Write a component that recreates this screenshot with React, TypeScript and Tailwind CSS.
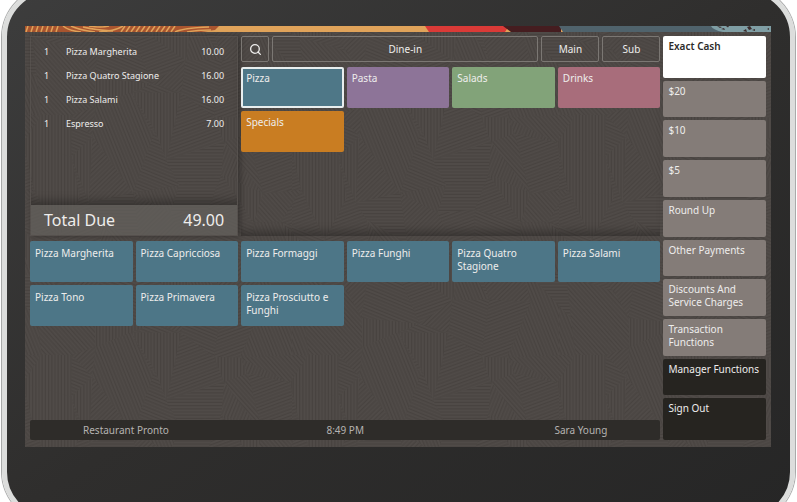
import { Search } from 'lucide-react';
import clsx from 'clsx';

const order = [
  { qty: 1, name: 'Pizza Margherita', price: 10 },
  { qty: 1, name: 'Pizza Quatro Stagione', price: 16 },
  { qty: 1, name: 'Pizza Salami', price: 16 },
  { qty: 1, name: 'Espresso', price: 7 },
];

const categories = [
  { name: 'Pizza', tone: 'bg-[#4e7787] border-2 border-[#e8eeee] px-[3px] pt-[3px]', active: true },
  { name: 'Pasta', tone: 'bg-[#8d7498] px-[5px] pt-[5px]' },
  { name: 'Salads', tone: 'bg-[#82a379] px-[5px] pt-[5px]' },
  { name: 'Drinks', tone: 'bg-[#a86d7b] px-[5px] pt-[5px]' },
  { name: 'Specials', tone: 'bg-[#c97d22] px-[5px] pt-[5px]' },
];

const items = [
  'Pizza Margherita',
  'Pizza Capricciosa',
  'Pizza Formaggi',
  'Pizza Funghi',
  'Pizza Quatro Stagione',
  'Pizza Salami',
  'Pizza Tono',
  'Pizza Primavera',
  'Pizza Prosciutto e Funghi',
];

const actions = [
  { name: 'Exact Cash', tone: 'bg-white text-[#2c2a29] font-semibold grow-[1.15]' },
  { name: '$20', tone: 'bg-[#847c78] grow' },
  { name: '$10', tone: 'bg-[#847c78] grow' },
  { name: '$5', tone: 'bg-[#847c78] grow' },
  { name: 'Round Up', tone: 'bg-[#847c78] grow' },
  { name: 'Other Payments', tone: 'bg-[#847c78] grow' },
  { name: 'Discounts And Service Charges', tone: 'bg-[#847c78] grow' },
  { name: 'Transaction Functions', tone: 'bg-[#847c78] grow' },
  { name: 'Manager Functions', tone: 'bg-[#262420] grow' },
  { name: 'Sign Out', tone: 'bg-[#262420] grow-[1.15]' },
];

const total = order.reduce((sum, line) => sum + line.qty * line.price, 0);

// Hatched facets: a jittered grid that wraps at the tile edges
const TILE_W = 267;
const TILE_H = 240;
const COLS = 7;
const ROWS = 6;
const ANGLES = [0, 22, 48, 68, 90, 112, 136, 160];

const noise = (n: number) => {
  const v = Math.sin(n * 127.1 + 11.7) * 43758.5453;
  return v - Math.floor(v);
};

const vertex = (c: number, r: number) => {
  const id = (c % COLS) + (r % ROWS) * COLS;
  return [
    ((c + (noise(id) - 0.5) * 0.9) * TILE_W) / COLS,
    ((r + (noise(id + 200) - 0.5) * 0.9) * TILE_H) / ROWS,
  ];
};

const facets: { points: string; hatch: number }[] = [];
for (let r = -1; r <= ROWS; r++) {
  for (let c = -1; c <= COLS; c++) {
    const col = (c + COLS) % COLS;
    const row = (r + ROWS) % ROWS;
    const id = col + row * COLS;
    const corner = (x: number, y: number) => {
      const [px, py] = vertex(col + x, row + y);
      return `${px + ((c - col) / COLS) * TILE_W},${py + ((r - row) / ROWS) * TILE_H}`;
    };
    const [a, b, d, e] = [corner(0, 0), corner(1, 0), corner(1, 1), corner(0, 1)];
    const hatch = Math.floor(noise(id + 400) * ANGLES.length);
    if (noise(id + 600) > 0.5) {
      facets.push({ points: `${a} ${b} ${d} ${e}`, hatch });
    } else {
      facets.push({ points: `${a} ${b} ${d}`, hatch });
      facets.push({ points: `${a} ${d} ${e}`, hatch: (hatch + 3) % ANGLES.length });
    }
  }
}

const Texture = () => (
  <svg className="absolute inset-0 h-full w-full" aria-hidden="true">
    <defs>
      {ANGLES.map((angle, i) => (
        <pattern key={angle} id={`hatch${i}`} width="16" height="16" patternUnits="userSpaceOnUse" patternTransform={`rotate(${angle})`}>
          <rect width="16" height="16" fill="#504b48" />
          <path d="M0 2H16M0 5.2H16M0 8.4H16M0 11.6H16M0 14.8H16" stroke="#484340" strokeWidth="1.2" />
        </pattern>
      ))}
      <pattern id="facets" width={TILE_W} height={TILE_H} patternUnits="userSpaceOnUse">
        {facets.map((facet, i) => (
          <polygon key={i} points={facet.points} fill={`url(#hatch${facet.hatch})`} />
        ))}
      </pattern>
    </defs>
    <rect width="100%" height="100%" fill="url(#facets)" />
  </svg>
);

const Banner = () => (
  <svg className="relative block h-[6px] w-full" viewBox="0 0 746 6" preserveAspectRatio="none" aria-hidden="true">
    <rect width="746" height="6" fill="#e0a35a" />
    <path d="M0 0H194L190 4L176 6H0Z" fill="#a9552f" />
    <g stroke="#e0a35a" strokeWidth="1.5" fill="none">
      {[3, 8, 13, 18, 23, 28, 33].map((x) => (
        <path key={x} d={`M${x} 0l-2 6`} />
      ))}
      <path d="M38 0Q44 5 56 6M46 0Q54 4 70 6M58 1Q70 4 88 5M74 6Q90 5 98 0M64 0Q76 2 84 0" />
      {[96, 101, 106, 111, 116, 121, 126, 131, 136, 141, 146].map((x) => (
        <path key={x} d={`M${x + 4} 0l-4 6`} />
      ))}
      <path d="M150 6Q158 2 184 1M162 6Q172 4 186 4" />
    </g>
    <path d="M400 0H484L480 6H404Z" fill="#da3a37" />
    <path d="M478 0H536V6H486Z" fill="#451d20" />
    <path d="M534 0H746V6H538Z" fill="#50636c" />
    <path d="M686 0H746V6H698Q688 4 686 0Z" fill="#7f9ea4" />
    <path d="M692 0l5 1-2 1zM696 3l3-1 1 2zM701 0h3l-1 1.5zM718 5l3-2 1 3zM722 1l3-1 2 3-3 1zM727 4l3-1v2zM742 3l2-1v2z" fill="#3b2c2d" />
  </svg>
);

const Tile = ({ label, className, pressed }: { label: string; className: string; pressed?: boolean }) => (
  <button type="button" aria-pressed={pressed} className={clsx('flex items-start rounded-[2px] text-left text-[10px] leading-[13px]', className)}>
    {label}
  </button>
);

const Receipt = () => (
  <section className="col-span-2 flex flex-col border border-[#5b5753]/60 shadow-[2px_0_5px_rgba(0,0,0,0.3)]">
    <div className="flex-1 px-[13px] pt-[3px] shadow-[inset_0_-10px_10px_-6px_rgba(0,0,0,0.3)]">
      <table className="w-full text-[9px] leading-6">
        <tbody>
          {order.map((line) => (
            <tr key={line.name}>
              <td className="w-[22px] p-0">{line.qty}</td>
              <td className="p-0">{line.name}</td>
              <td className="p-0 text-right">{line.price.toFixed(2)}</td>
            </tr>
          ))}
        </tbody>
      </table>
    </div>
    <div className="flex h-[30px] items-center justify-between bg-[#65625e]/70 px-[13px] text-base">
      <span>Total Due</span>
      <span>{total.toFixed(2)}</span>
    </div>
  </section>
);

const toolButton = 'flex items-center justify-center rounded-[2px] border border-[#7b7773] text-[10px]';

const Menu = () => (
  <section className="col-span-4 flex flex-col gap-[5px] shadow-[inset_0_-10px_10px_-6px_rgba(0,0,0,0.3)]">
    <div className="flex h-[26px] gap-[3px]">
      <button type="button" aria-label="Search" className={clsx(toolButton, 'w-7')}>
        <Search size={13} strokeWidth={2.4} />
      </button>
      <button type="button" className={clsx(toolButton, 'flex-1')}>Dine-in</button>
      <button type="button" className={clsx(toolButton, 'w-[58px]')}>Main</button>
      <button type="button" className={clsx(toolButton, 'w-[58px]')}>Sub</button>
    </div>
    <div className="grid auto-rows-[41px] grid-cols-4 gap-[3px]">
      {categories.map((category) => (
        <Tile key={category.name} label={category.name} className={category.tone} pressed={Boolean(category.active)} />
      ))}
    </div>
  </section>
);

export default function App() {
  return (
    <div className="flex h-screen overflow-hidden bg-white px-[2px] font-['Noto_Sans','Open_Sans',sans-serif] text-[#eeedec]">
      <div className="-mt-[13px] -mb-[20px] flex flex-1 flex-col rounded-[50px] border-[5px] border-[#dcdddc] bg-linear-to-br from-[#3d3d3d] via-[#2f2e2d] to-[#262626] pt-[34px] pr-[19px] pb-[70px] pl-[18px] ring-1 ring-[#a9aaaa]">
        <main className="relative flex flex-1 flex-col bg-[#4b4743]">
          <Texture />
          <Banner />
          <div className="relative grid flex-1 grid-cols-7 gap-[3px] px-[5px] pt-[4px] pb-[7px]">
            <div className="col-span-6 flex flex-col">
              <div className="grid h-[200px] grid-cols-6 gap-[3px]">
                <Receipt />
                <Menu />
              </div>
              <div className="mt-[5px] grid auto-rows-[41px] grid-cols-6 gap-[3px]">
                {items.map((item) => (
                  <Tile key={item} label={item} className="bg-[#4d7687] px-[5px] pt-[6px]" />
                ))}
              </div>
              <footer className="mt-auto grid h-5 grid-cols-[1fr_auto_1fr] items-center rounded-[2px] bg-[#2e2c29] px-[53px] text-[10px] text-[#b5b3b1]">
                <span>Restaurant Pronto</span>
                <time>8:49 PM</time>
                <span className="text-right">Sara Young</span>
              </footer>
            </div>
            <aside className="flex flex-col gap-[3px]">
              {actions.map((action) => (
                <Tile key={action.name} label={action.name} className={clsx('basis-0 pt-1 pl-[5px]', action.tone)} />
              ))}
            </aside>
          </div>
        </main>
      </div>
    </div>
  );
}
